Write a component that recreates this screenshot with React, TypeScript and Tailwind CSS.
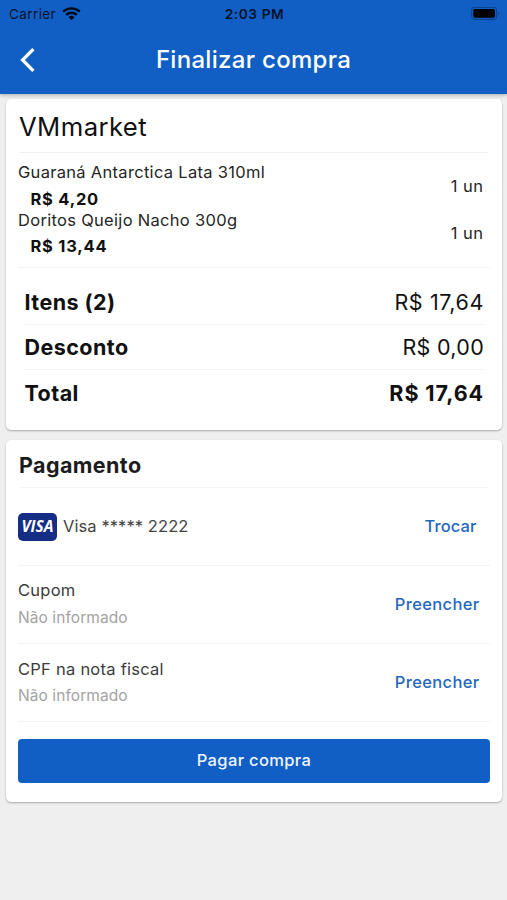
const items = [
  { name: 'Guaraná Antarctica Lata 310ml', price: 'R$ 4,20', quantity: '1 un' },
  { name: 'Doritos Queijo Nacho 300g', price: 'R$ 13,44', quantity: '1 un' },
];

const totals = [
  { label: 'Itens (2)', value: 'R$ 17,64', border: 'border-b', weight: 'font-normal tracking-[0.6px]' },
  { label: 'Desconto', value: 'R$ 0,00', border: 'border-b', weight: 'font-normal tracking-[0.3px]' },
  { label: 'Total', value: 'R$ 17,64', border: '', weight: 'font-bold tracking-[0.9px]' },
];

const fields = [
  { label: 'Cupom', value: 'Não informado', leading: 'leading-[28px]' },
  { label: 'CPF na nota fiscal', value: 'Não informado', leading: 'leading-[26px]' },
];

function StatusBar() {
  return (
    <div className="grid h-7 grid-cols-3 items-center pl-[9px] pr-[7px] text-[#04122a]">
      <div className="flex items-center gap-[6px]">
        <span className="text-[13.5px] tracking-[0.4px]">Carrier</span>
        <svg className="h-[14px] w-[19px]" viewBox="0 0 19 14" fill="none" stroke="#000a18">
          <path d="M1.2 4.7a12 12 0 0 1 16.6 0" strokeWidth="2.4" />
          <path d="M4.2 7.9a7.6 7.6 0 0 1 10.6 0" strokeWidth="2.3" />
          <path d="M6.5 10.2a4.3 4.3 0 0 1 6 0L9.5 13.2z" fill="#000a18" stroke="none" />
        </svg>
      </div>
      <span className="text-center text-[13.7px] font-semibold tracking-[0.55px]">2:03 PM</span>
      <svg className="h-[14px] w-[29px] justify-self-end" viewBox="0 0 29 14">
        <rect x="0.6" y="0.4" width="25" height="12" rx="3.4" fill="none" stroke="#0c4391" strokeWidth="1.1" />
        <rect x="2.2" y="2" width="21.8" height="8.8" rx="1.8" fill="#000" />
        <path d="M27 4.5v4c1.5-.6 1.5-3.4 0-4z" fill="#0c4391" />
      </svg>
    </div>
  );
}

function VisaBadge() {
  return (
    <div className="flex h-7 w-[39px] items-center justify-center rounded-[5px] bg-[#152d84]">
      <span className="font-['Open_Sans',sans-serif] text-[15.5px] font-bold italic leading-none text-white">
        VISA
      </span>
    </div>
  );
}

export default function App() {
  return (
    <div className="flex h-[900px] w-[507px] flex-col overflow-hidden bg-[#efefef] font-['Inter','Liberation_Sans',sans-serif] text-[#111]">
      {/* Header */}
      <header className="relative h-[94px] shrink-0 bg-[#115fc4] shadow-[0_1px_4px_rgba(0,0,0,0.3)]">
        <StatusBar />
        <div className="grid h-[64px] grid-cols-[60px_1fr_60px] items-center">
          <button className="pl-[20px]" aria-label="Voltar">
            <svg className="h-6 w-4" viewBox="0 0 16 24" fill="none" stroke="#fff" strokeWidth="3.3">
              <path d="M13.4 1.2L2.6 12l10.8 10.8" />
            </svg>
          </button>
          <h1 className="text-center text-[24px] font-medium tracking-[0.3px] text-white">Finalizar compra</h1>
        </div>
      </header>

      <main className="flex flex-col gap-[10px] pl-[6px] pr-[5px] pt-[5px]">
        {/* Order summary */}
        <section className="h-[331px] rounded-[5px] bg-white px-3 shadow-[0_1px_2px_rgba(0,0,0,0.3)]">
          <h2 className="mx-px flex h-[54px] items-center border-b border-[#f1f1f1] pt-[3px] text-[25.7px] tracking-[0.4px]">
            VMmarket
          </h2>
          <div className="flex h-[115px] flex-col border-b border-[#f4f4f4] pt-[9px]">
            {items.map((item) => (
              <div key={item.name} className="flex h-[47.5px] items-center justify-between pr-[6.5px] text-[16.5px]">
                <div className="pt-px">
                  <p className="h-[24.5px] leading-[21px] tracking-[0.3px] text-[#262626]">{item.name}</p>
                  <p className="pl-[12.5px] leading-[24px] font-bold tracking-[0.75px]">{item.price}</p>
                </div>
                <span className="pt-px tracking-[0.5px] text-[#262626]">{item.quantity}</span>
              </div>
            ))}
          </div>
          <div className="pl-[6.5px] pr-[6px] pt-[12px]">
            {totals.map((total) => (
              <div
                key={total.label}
                className={`flex h-[45.2px] items-center justify-between border-[#f4f4f4] text-[21.5px] ${total.border}`}
              >
                <span className="font-bold tracking-[0.45px]">{total.label}</span>
                <span className={total.weight}>{total.value}</span>
              </div>
            ))}
          </div>
        </section>

        {/* Payment */}
        <section className="h-[362px] rounded-[5px] bg-white px-3 shadow-[0_1px_2px_rgba(0,0,0,0.3)]">
          <h2 className="mx-px flex h-[48px] items-center border-b border-[#f4f4f4] pt-[3px] text-[21.5px] font-bold tracking-[0.4px] text-[#1c1c1c]">
            Pagamento
          </h2>
          <div className="flex h-[78px] items-center justify-between border-b border-[#f4f4f4] pr-[13.5px] text-[16.5px]">
            <div className="flex items-center gap-[6px]">
              <VisaBadge />
              <span className="tracking-[0.08px] text-[#444]">Visa ***** 2222</span>
            </div>
            <button className="font-medium tracking-[0.1px] text-[#2468bd]">Trocar</button>
          </div>
          {fields.map((field) => (
            <div
              key={field.label}
              className="flex h-[78px] items-center justify-between border-b border-[#f4f4f4] pr-[10.5px] text-[16.5px]"
            >
              <div>
                <p className="leading-[27px] tracking-[0.25px] text-[#3c3c3c]">{field.label}</p>
                <p className={`text-[15.5px] tracking-[0.08px] text-[#a3a3a3] ${field.leading}`}>{field.value}</p>
              </div>
              <button className="font-medium tracking-[0.35px] text-[#2468bd]">Preencher</button>
            </div>
          ))}
          <button className="mt-[17px] h-[44px] w-full rounded-[4px] bg-[#115fc4] pb-[2px] text-[16.5px] font-medium tracking-[0.35px] text-[#eef5ff]">
            Pagar compra
          </button>
        </section>
      </main>
    </div>
  );
}
